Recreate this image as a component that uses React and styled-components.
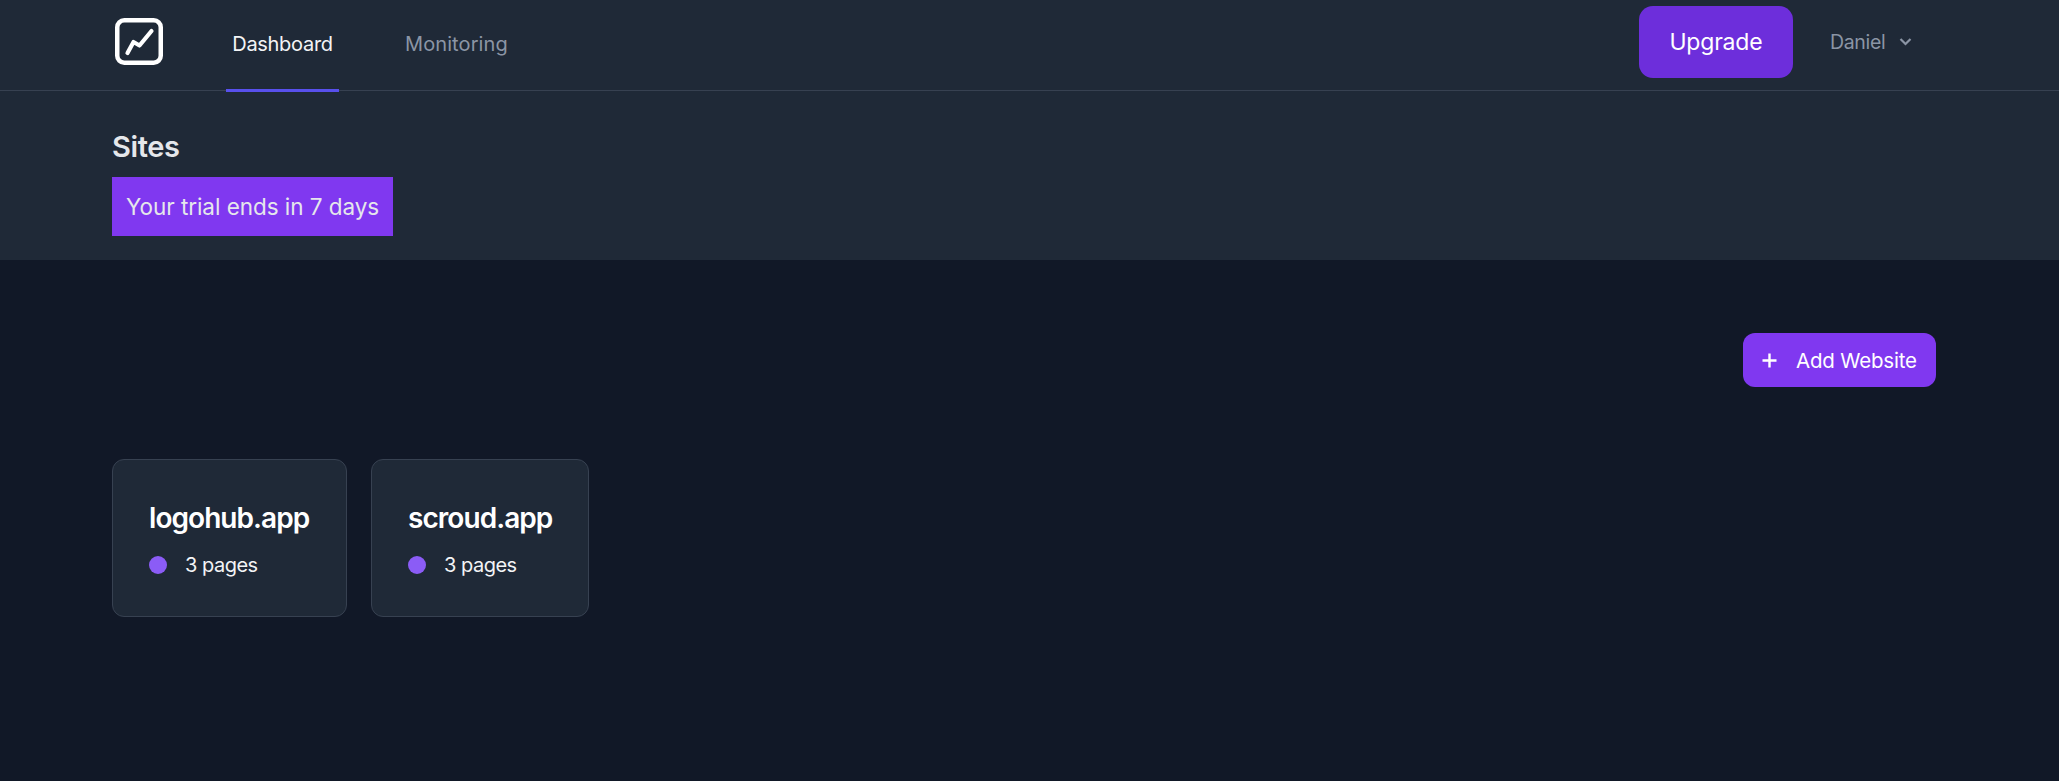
import React from "react";
import styled, { createGlobalStyle } from "styled-components";

const Global = createGlobalStyle`
  html, body { margin: 0; padding: 0; background: #111827; }
  body { font-family: "Inter", "Noto Sans", sans-serif; }
  * { box-sizing: border-box; }
`;

const Page = styled.div`
  min-height: 781px;
  background: #111827;
  color: #fff;
`;
const Top = styled.header`
  background: #1f2937;
`;
const Nav = styled.nav`
  height: 91px;
  border-bottom: 1px solid #374151;
  padding: 0 146.5px 0 112px;
  display: flex;
  align-items: stretch;
  justify-content: space-between;
`;
const NavLeft = styled.div`
  display: flex;
  align-items: flex-start;
`;
const Logo = styled.svg`
  width: 48px;
  height: 48px;
  margin: 18px 0 0 3px;
  display: block;
`;
const Tabs = styled.div`
  display: flex;
  gap: 60px;
  margin-left: 63px;
`;
const Tab = styled.a`
  height: 92px;
  padding: 0 6px 2px;
  display: flex;
  align-items: center;
  justify-content: ${(p) => (p.$active ? "center" : "flex-start")};
  min-width: ${(p) => (p.$active ? "113px" : "0")};
  font-size: 20px;
  letter-spacing: ${(p) => (p.$active ? "-0.3px" : "0.1px")};
  color: ${(p) => (p.$active ? "#f3f4f6" : "#8b95a5")};
  border-bottom: 3px solid ${(p) => (p.$active ? "#5850ec" : "transparent")};
`;
const NavRight = styled.div`
  display: flex;
  align-items: flex-start;
  padding-top: 6px;
`;
const Upgrade = styled.button`
  width: 154px;
  height: 72px;
  border: 0;
  border-radius: 14px;
  background: #6d2edb;
  color: #fff;
  font: 400 23px "Inter", sans-serif;
  letter-spacing: -0.2px;
`;
const User = styled.div`
  display: flex;
  align-items: center;
  gap: 12px;
  margin-left: 37px;
  height: 72px;
  padding-bottom: 1px;
  font-size: 19.5px;
  letter-spacing: -0.3px;
  color: #8b95a5;
`;
const Heading = styled.div`
  height: 169px;
  padding: 39px 112px 0;
`;
const Title = styled.h1`
  margin: 0;
  font-size: 29px;
  line-height: 34px;
  font-weight: 600;
  letter-spacing: -0.4px;
  color: #e5e7eb;
`;
const Trial = styled.div`
  display: inline-flex;
  align-items: center;
  width: 281px;
  height: 59px;
  margin-top: 13px;
  padding-left: 14px;
  background: #8038f0;
  color: #e5e7eb;
  font-size: 22.5px;
  letter-spacing: -0.05px;
  white-space: nowrap;
`;
const Main = styled.main`
  padding: 73px 123px 0 112px;
`;
const Actions = styled.div`
  display: flex;
  justify-content: flex-end;
`;
const AddButton = styled.button`
  width: 193px;
  height: 54px;
  border: 0;
  border-radius: 12px;
  background: #8038f0;
  color: #fff;
  display: flex;
  align-items: center;
  padding-left: 19px;
  gap: 19px;
  font: 400 20.5px "Inter", sans-serif;
  letter-spacing: -0.2px;
  white-space: nowrap;
`;
const Cards = styled.div`
  display: flex;
  gap: 24px;
  margin-top: 72px;
`;
const Card = styled.article`
  width: ${(p) => p.$w}px;
  height: 158px;
  padding: 40px 36px 0;
  background: #1f2937;
  border: 1px solid #374151;
  border-radius: 12px;
`;
const CardTitle = styled.h2`
  margin: 0;
  font-size: 28px;
  line-height: 36px;
  font-weight: 600;
  letter-spacing: -0.95px;
  color: #fff;
  white-space: nowrap;
`;
const Meta = styled.div`
  display: flex;
  align-items: center;
  gap: 18px;
  margin-top: 17px;
  font-size: 20px;
  letter-spacing: -0.5px;
  color: #f3f4f6;
  white-space: nowrap;
`;
const Dot = styled.span`
  width: 18px;
  height: 18px;
  border-radius: 50%;
  background: #8b5cf6;
`;

export default function App() {
  return (
    <Page>
      <Global />
      <Top>
        <Nav>
          <NavLeft>
            <Logo viewBox="0 0 48 48" fill="none">
              <rect x="2.25" y="2.25" width="43.5" height="42.5" rx="7" stroke="#fff" strokeWidth="4.5" />
              <path d="M12.5 35 L18.5 24 L24.5 27.5 L36.5 13" stroke="#fff" strokeWidth="4.2" strokeLinecap="round" strokeLinejoin="round" />
            </Logo>
            <Tabs>
              <Tab $active>Dashboard</Tab>
              <Tab>Monitoring</Tab>
            </Tabs>
          </NavLeft>
          <NavRight>
            <Upgrade>Upgrade</Upgrade>
            <User>
              Daniel
              <svg width="15" height="15" viewBox="0 0 15 15" fill="none">
                <path d="M2.5 5 L7.5 10 L12.5 5" stroke="#8b95a5" strokeWidth="2.2" />
              </svg>
            </User>
          </NavRight>
        </Nav>
        <Heading>
          <Title>Sites</Title>
          <Trial>Your trial ends in 7 days</Trial>
        </Heading>
      </Top>
      <Main>
        <Actions>
          <AddButton>
            <svg width="15" height="15" viewBox="0 0 15 15" fill="none">
              <path d="M7.5 0.5 V14.5 M0.5 7.5 H14.5" stroke="#fff" strokeWidth="2.4" />
            </svg>
            Add Website
          </AddButton>
        </Actions>
        <Cards>
          <Card $w={235}>
            <CardTitle>logohub.app</CardTitle>
            <Meta><Dot />3 pages</Meta>
          </Card>
          <Card $w={218}>
            <CardTitle>scroud.app</CardTitle>
            <Meta><Dot />3 pages</Meta>
          </Card>
        </Cards>
      </Main>
    </Page>
  );
}
